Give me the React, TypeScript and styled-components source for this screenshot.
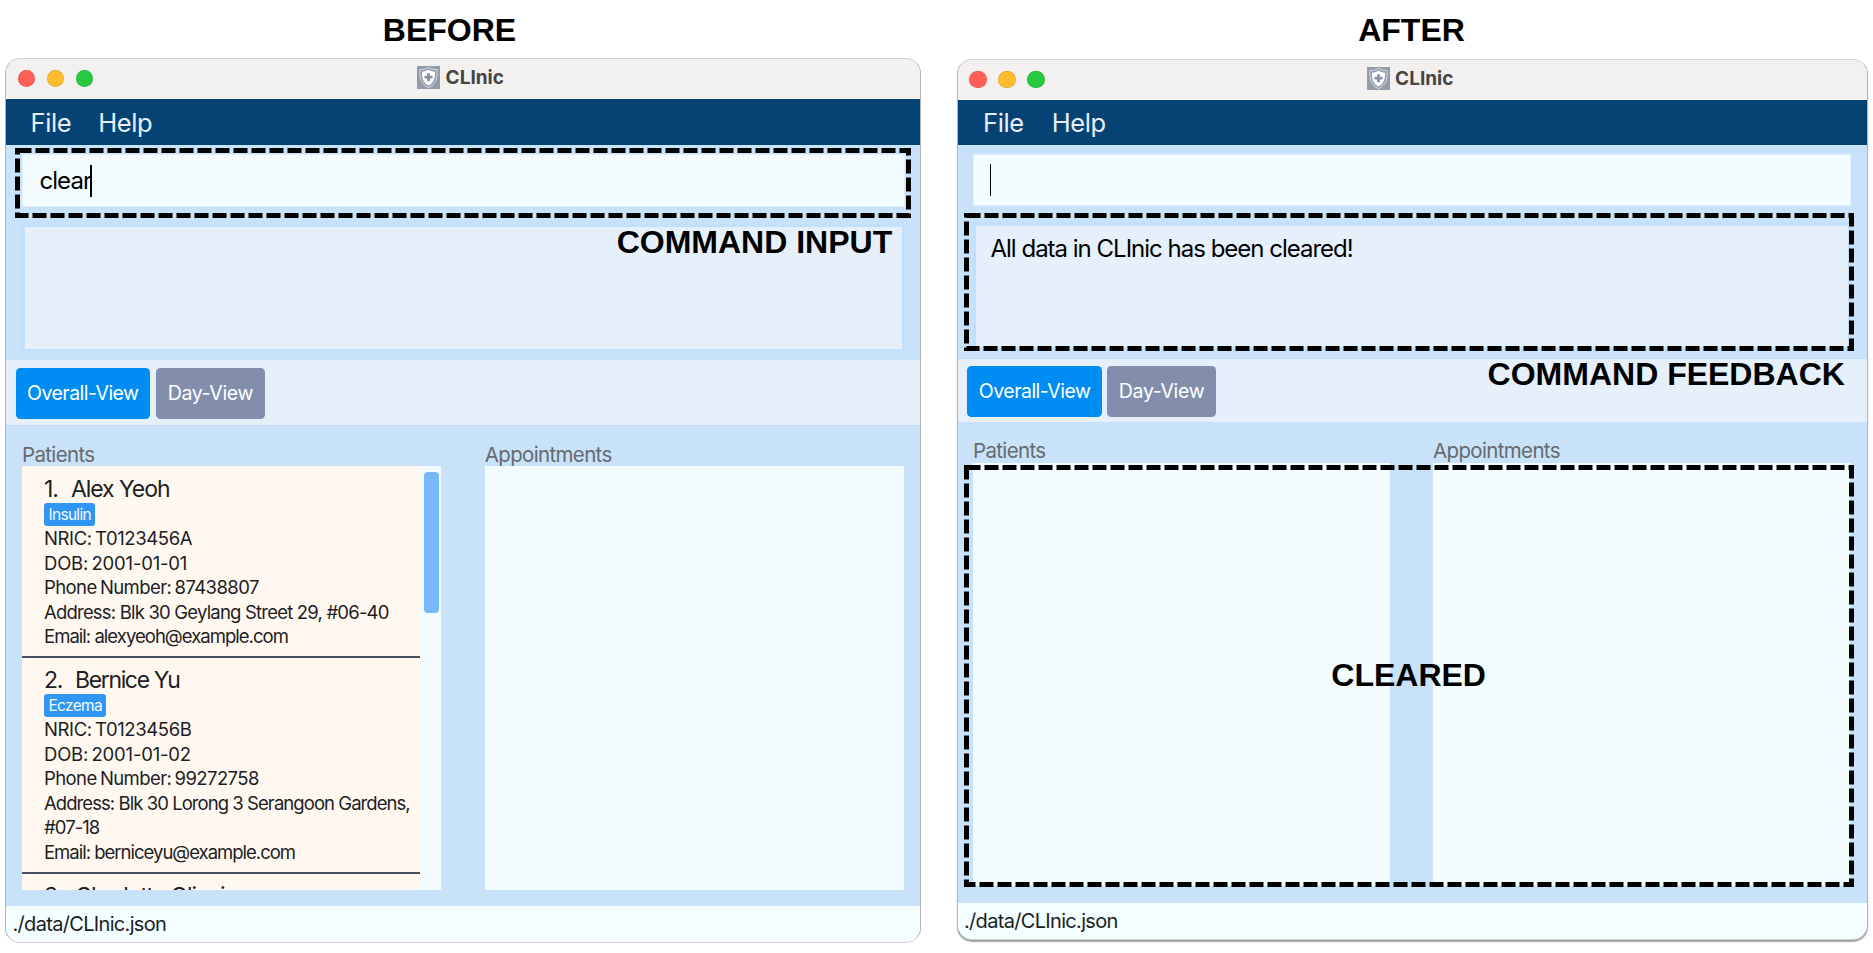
import React from 'react';
import styled, { createGlobalStyle, ThemeProvider } from 'styled-components';

const GlobalStyle = createGlobalStyle`
  * { box-sizing: border-box; }
  body { margin: 0; background: #fff; font-family: Inter, "Liberation Sans", sans-serif; }
`;

/* Window measurements: the two windows have slightly different sizes. */
const beforeTheme = {
  width: 916, top: 58, lights: 11.5, menuHeight: 46, menuPad: 24.5, menuGap: 27,
  command: 215, commandPad: '9px 15px 0 16px', inputHeight: 53, inputGap: 17, feedbackHeight: 128,
  tabBar: 65, tabTop: 8, tabPad: 9.5, tabGap: 6,
  main: 481, mainPad: '17px 16px 16px 16px', columnGap: 43.5, statusPad: 6.5,
  frame: '#b4b4b6', shadow: 'none', captionShift: 27, labelLine: 26,
};

const afterTheme = {
  ...beforeTheme,
  width: 911, top: 59, lights: 11, menuHeight: 45, menuPad: 25, menuGap: 28,
  command: 214, commandPad: '9px 16px 0 15px', inputHeight: 52, feedbackHeight: 127,
  tabBar: 63, tabTop: 7, tabPad: 9.3, tabGap: 5.4,
  mainPad: '17px 17px 17px 15px', columnGap: 43, statusPad: 6,
  shadow: '0 2px 1px #a4a4a4', captionShift: 2, labelLine: 24.5,
};

const Page = styled.div`
  position: relative;
  display: flex;
  gap: 36px;
  width: 1873px;
  height: 953px;
  padding-left: 5px;
  overflow: hidden;
  background: #fff;
`;

const Figure = styled.section`
  display: flex;
  flex-direction: column;
  width: ${(p) => p.theme.width}px;
`;

const Caption = styled.h2`
  margin: 0;
  padding: 14px ${(p) => p.theme.captionShift}px 0 0;
  height: ${(p) => p.theme.top}px;
  font: bold 32px/32px "Liberation Sans", Arial, sans-serif;
  color: #000;
  text-align: center;
`;

const Frame = styled.div`
  display: flex;
  flex-direction: column;
  overflow: hidden;
  border: 1px solid ${(p) => p.theme.frame};
  border-top-color: #d2d2d2;
  border-bottom-color: #d2d2d2;
  border-radius: 15px;
  background: #c8e3f9;
  box-shadow: ${(p) => p.theme.shadow};
`;

const TitleBar = styled.div`
  display: flex;
  align-items: center;
  height: 40px;
  background: #f3f1f0;
  border-bottom: 1px solid #fff;
`;

const Lights = styled.div`
  flex: 1;
  display: flex;
  gap: 11.6px;
  padding-left: ${(p) => p.theme.lights}px;
`;

const Light = styled.span<{ $color: string }>`
  width: 17.5px;
  height: 17.5px;
  border-radius: 50%;
  background: ${(p) => p.$color};
  box-shadow: inset 0 0 0 0.7px rgba(0, 0, 0, 0.12);
`;

const Title = styled.div`
  display: flex;
  align-items: center;
  gap: 5.5px;
  padding: 0 5px 2px 0;
  font-size: 19px;
  font-weight: 700;
  line-height: 23px;
  color: #454443;
`;

const Spacer = styled.div`
  flex: 1;
  padding-right: ${(p) => p.theme.lights}px;
`;

const MenuBar = styled.nav`
  display: flex;
  align-items: center;
  gap: ${(p) => p.theme.menuGap}px;
  height: ${(p) => p.theme.menuHeight}px;
  padding: 1px 0 0 ${(p) => p.theme.menuPad}px;
  background: #064375;
  color: #e9f0fa;
  font-size: 25.5px;
  letter-spacing: -0.4px;
  line-height: 32px;
`;

const CommandArea = styled.div`
  display: flex;
  flex-direction: column;
  gap: ${(p) => p.theme.inputGap}px;
  height: ${(p) => p.theme.command}px;
  padding: ${(p) => p.theme.commandPad};
  border-bottom: 1px solid #c1defa;
`;

const CommandInput = styled.div`
  flex: none;
  display: flex;
  align-items: center;
  height: ${(p) => p.theme.inputHeight}px;
  padding-left: 16.5px;
  border: 1px solid #e2effc;
  background: #f3fcff;
  font-size: 24px;
  letter-spacing: -0.95px;
  line-height: 30px;
  color: #000;
`;

const Caret = styled.i`
  width: 1.5px;
  height: 32px;
  margin-left: -1px;
  background: #000;
`;

const Feedback = styled.div`
  flex: none;
  height: ${(p) => p.theme.feedbackHeight}px;
  padding: 8px 14.5px;
  border: 3px solid #c3e0fb;
  background: #e6f0fb;
  font-size: 24px;
  letter-spacing: -1px;
  line-height: 29px;
  color: #000;
`;

const TabBar = styled.div`
  display: flex;
  align-items: flex-start;
  gap: ${(p) => p.theme.tabGap}px;
  height: ${(p) => p.theme.tabBar}px;
  padding: ${(p) => p.theme.tabTop}px 0 0 ${(p) => p.theme.tabPad}px;
  background: #e6f0fb;
`;

const Tab = styled.button<{ $active?: boolean }>`
  width: ${(p) => (p.$active ? 134.6 : 108.6)}px;
  height: 51px;
  padding: 0 0 2px;
  border: 0;
  border-radius: 4.5px;
  background: ${(p) => (p.$active ? '#008df3' : '#828fac')};
  color: #fff;
  font: 19.5px/24px Inter, sans-serif;
  letter-spacing: ${(p) => (p.$active ? -0.52 : -0.32)}px;
`;

const Main = styled.div`
  display: grid;
  grid-template-columns: 1fr 1fr;
  column-gap: ${(p) => p.theme.columnGap}px;
  height: ${(p) => p.theme.main}px;
  padding: ${(p) => p.theme.mainPad};
  border-top: 1px solid #c4e0fa;
`;

const Column = styled.div`
  display: flex;
  flex-direction: column;
  min-height: 0;
  margin-top: -1px;
`;

const Label = styled.div`
  height: 24px;
  font-size: 20.5px;
  line-height: ${(p) => p.theme.labelLine}px;
  letter-spacing: -0.65px;
  color: #666a6e;
`;

const List = styled.div`
  flex: 1;
  display: flex;
  min-height: 0;
  overflow: hidden;
  background: #f3fcff;
`;

const Cells = styled.div`
  width: 398px;
  padding-top: 1px;
  background: #fff8f1;
`;

const Cell = styled.article`
  padding: 8px 0 7.5px 22px;
  border-bottom: 2px solid #474e5c;
  color: #1d1d1f;
`;

const Name = styled.div<{ $tracking: number }>`
  display: flex;
  gap: 13px;
  height: 27.5px;
  font-size: 23px;
  line-height: 28.5px;
  letter-spacing: ${(p) => p.$tracking}px;
`;

const Tag = styled.div`
  width: fit-content;
  height: 23.5px;
  padding: 0 4.5px;
  border-radius: 3px;
  background: #3096f3;
  color: #f2f9ff;
  font-size: 15.5px;
  letter-spacing: -0.7px;
  line-height: 24.5px;
`;

const Line = styled.div<{ $tracking: number; $wordGap?: number }>`
  font-size: 18.5px;
  line-height: 24.5px;
  letter-spacing: ${(p) => p.$tracking}px;
  word-spacing: ${(p) => p.$wordGap ?? 0}px;
  white-space: pre-line;
`;

const ScrollTrack = styled.div`
  flex: 1;
  padding: 6px 2.5px 0 4px;
`;

const Thumb = styled.div`
  height: 141px;
  border-radius: 4px;
  background: #77b9f8;
`;

const StatusBar = styled.footer`
  height: 36px;
  padding-left: ${(p) => p.theme.statusPad}px;
  background: #f4fdff;
  font-size: 20px;
  line-height: 37.5px;
  letter-spacing: -0.68px;
  color: #1b1d1e;
`;

const Annotations = styled.div`
  position: absolute;
  inset: 0;
`;

const Outline = styled.svg`
  position: absolute;
  inset: 0;
  fill: none;
  stroke: #000;
  stroke-width: 5;
  stroke-dasharray: 14 4;
`;

const Note = styled.span<{ $x: number; $y: number }>`
  position: absolute;
  left: ${(p) => p.$x}px;
  top: ${(p) => p.$y}px;
  font: bold 32px/32px "Liberation Sans", Arial, sans-serif;
  color: #000;
  white-space: nowrap;
`;

const ShieldIcon = () => (
  <svg width="23" height="23" viewBox="0 0 23 23">
    <rect width="23" height="23" fill="#929cab" />
    <path
      d="M11.5 1.3C9.2 3 5.8 3.8 2.8 3.7c-.4 8 1.3 14.6 8.7 18 7.4-3.4 9.1-10 8.7-18C17.2 3.8 13.8 3 11.5 1.3Z"
      fill="none" stroke="#dfe4ea" strokeWidth="0.9"
    />
    <path d="M11.5 3.5C9.6 4.9 7.2 5.6 4.9 5.7c-.1 6.3 1.3 11 6.6 13.9 5.3-2.9 6.7-7.6 6.6-13.9C15.8 5.6 13.4 4.9 11.5 3.5Z" fill="#fff" />
    <path d="M11.5 7.2v8M7.5 11.2h8" stroke="#8792a3" strokeWidth="2.8" />
  </svg>
);

interface Patient {
  name: string;
  nameTracking: number;
  tag?: string;
  /* text, letter spacing, word spacing */
  lines: [string, number, number?][];
}

const patients: Patient[] = [
  {
    name: 'Alex Yeoh',
    nameTracking: -1.05,
    tag: 'Insulin',
    lines: [
      ['NRIC: T0123456A', -0.38, -1.6],
      ['DOB: 2001-01-01', -0.2, -1.6],
      ['Phone Number: 87438807', -0.58, -1.4],
      ['Address: Blk 30 Geylang Street 29, #06-40', -0.8],
      ['Email: alexyeoh@example.com', -0.97],
    ],
  },
  {
    name: 'Bernice Yu',
    nameTracking: -1.35,
    tag: 'Eczema',
    lines: [
      ['NRIC: T0123456B', -0.38, -1.6],
      ['DOB: 2001-01-02', -0.2, -1.6],
      ['Phone Number: 99272758', -0.58, -1.4],
      ['Address: Blk 30 Lorong 3 Serangoon Gardens,\n#07-18', -0.94],
      ['Email: berniceyu@example.com', -1],
    ],
  },
  { name: 'Charlotte Oliveiro', nameTracking: -1.05, lines: [] },
];

function PatientList() {
  return (
    <>
      <Cells>
        {patients.map((p, i) => (
          <Cell key={p.name}>
            <Name $tracking={p.nameTracking}><span>{i + 1}.</span><span>{p.name}</span></Name>
            {p.tag && <Tag>{p.tag}</Tag>}
            {p.lines.map(([text, tracking, wordGap]) => (
              <Line key={text} $tracking={tracking} $wordGap={wordGap}>{text}</Line>
            ))}
          </Cell>
        ))}
      </Cells>
      <ScrollTrack><Thumb /></ScrollTrack>
    </>
  );
}

interface ClinicProps {
  caption: string;
  command?: string;
  feedback?: string;
  filled?: boolean;
}

function ClinicWindow({ caption, command, feedback, filled }: ClinicProps) {
  return (
    <Figure>
      <Caption>{caption}</Caption>
      <Frame>
        <TitleBar>
          <Lights>
            <Light $color="#ff5f57" />
            <Light $color="#febc2e" />
            <Light $color="#28c840" />
          </Lights>
          <Title><ShieldIcon />CLInic</Title>
          <Spacer />
        </TitleBar>
        <MenuBar><span>File</span><span>Help</span></MenuBar>
        <CommandArea>
          <CommandInput>{command}<Caret /></CommandInput>
          <Feedback>{feedback}</Feedback>
        </CommandArea>
        <TabBar>
          <Tab $active>Overall-View</Tab>
          <Tab>Day-View</Tab>
        </TabBar>
        <Main>
          <Column><Label>Patients</Label><List>{filled && <PatientList />}</List></Column>
          <Column><Label>Appointments</Label><List /></Column>
        </Main>
        <StatusBar>./data/CLInic.json</StatusBar>
      </Frame>
    </Figure>
  );
}

export default function App() {
  return (
    <Page>
      <GlobalStyle />
      <ThemeProvider theme={beforeTheme}>
        <ClinicWindow caption="BEFORE" command="clear" filled />
      </ThemeProvider>
      <ThemeProvider theme={afterTheme}>
        <ClinicWindow caption="AFTER" feedback="All data in CLInic has been cleared!" />
      </ThemeProvider>
      <Annotations>
        <Outline width="1873" height="953">
          <rect x="17.5" y="150.5" width="891" height="65" />
          <rect x="966.5" y="215.5" width="885" height="133" />
          <rect x="966.5" y="467.5" width="885" height="417" />
        </Outline>
        <Note $x={616.7} $y={226}>COMMAND INPUT</Note>
        <Note $x={1487.6} $y={358}>COMMAND FEEDBACK</Note>
        <Note $x={1331.3} $y={659}>CLEARED</Note>
      </Annotations>
    </Page>
  );
}
